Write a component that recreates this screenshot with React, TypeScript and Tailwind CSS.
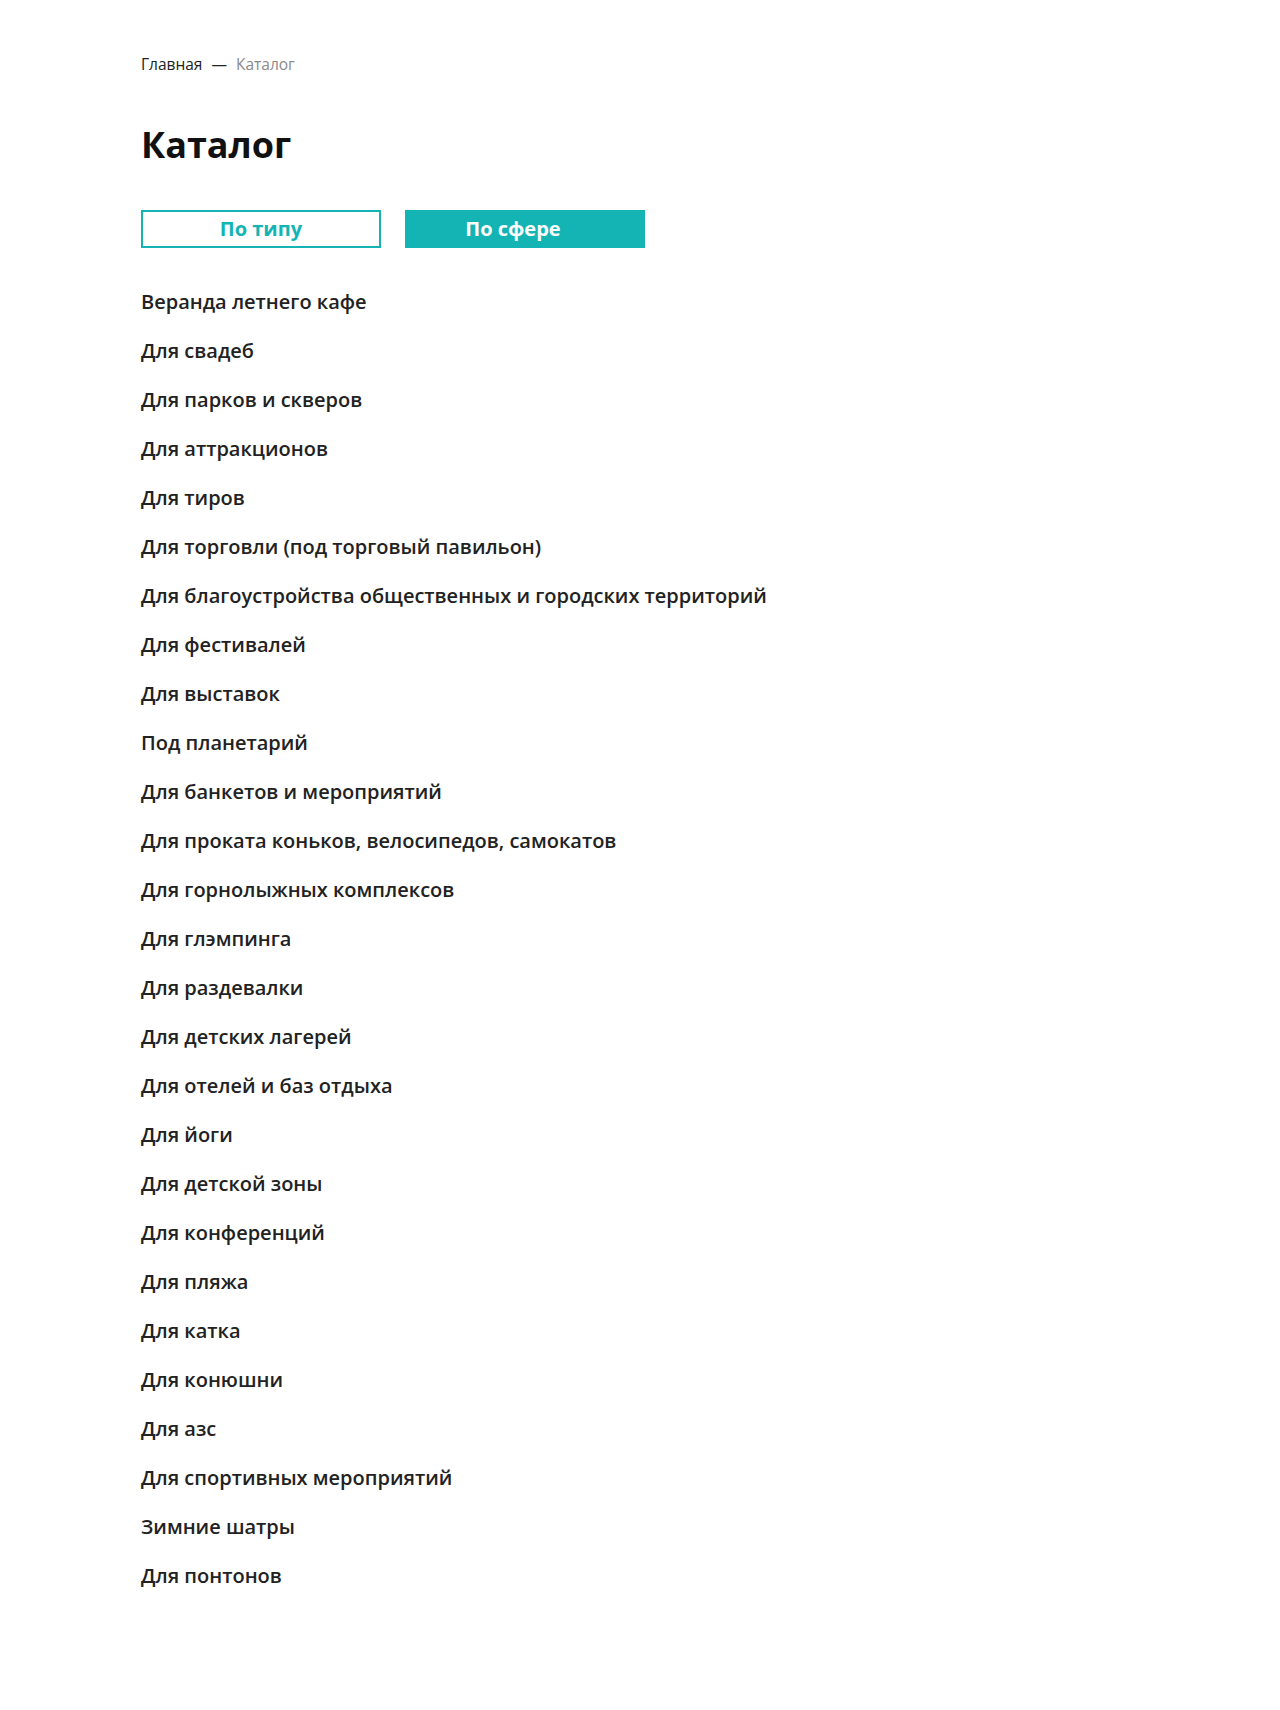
import React from "react";

const items = [
  "Веранда летнего кафе",
  "Для свадеб",
  "Для парков и скверов",
  "Для аттракционов",
  "Для тиров",
  "Для торговли (под торговый павильон)",
  "Для благоустройства общественных и городских территорий",
  "Для фестивалей",
  "Для выставок",
  "Под планетарий",
  "Для банкетов и мероприятий",
  "Для проката коньков, велосипедов, самокатов",
  "Для горнолыжных комплексов",
  "Для глэмпинга",
  "Для раздевалки",
  "Для детских лагерей",
  "Для отелей и баз отдыха",
  "Для йоги",
  "Для детской зоны",
  "Для конференций",
  "Для пляжа",
  "Для катка",
  "Для конюшни",
  "Для азс",
  "Для спортивных мероприятий",
  "Зимние шатры",
  "Для понтонов",
];

export default function App() {
  return (
    <div
      className="min-h-[1710px] bg-white pl-[141px] pt-[54px] text-[#222]"
      style={{ fontFamily: '"Open Sans", "Noto Sans", sans-serif' }}
    >
      <nav className="flex items-center text-[15.5px] leading-[20px]">
        <a href="#" className="text-[#222]">Главная</a>
        <span className="mx-[9px] text-[#222]">—</span>
        <span className="text-[#8a8a8a]">Каталог</span>
      </nav>
      <h1 className="mt-[49px] text-[36px] font-bold leading-[44px] text-[#111]">Каталог</h1>
      <div className="mt-[43px] flex gap-[24px]">
        <button className="flex h-[38px] w-[240px] items-center justify-center border-2 border-[#14b4b4] bg-white text-[20px] font-bold text-[#14b4b4]">
          По типу
        </button>
        <button className="flex h-[38px] w-[240px] items-center justify-center bg-[#14b4b4] pr-[24px] text-[20px] font-bold text-white">
          По сфере
        </button>
      </div>
      <ul className="mt-[29px]">
        {items.map((t) => (
          <li key={t} className="text-[20px] font-semibold leading-[49px] text-[#222]">
            <a href="#">{t}</a>
          </li>
        ))}
      </ul>
    </div>
  );
}
